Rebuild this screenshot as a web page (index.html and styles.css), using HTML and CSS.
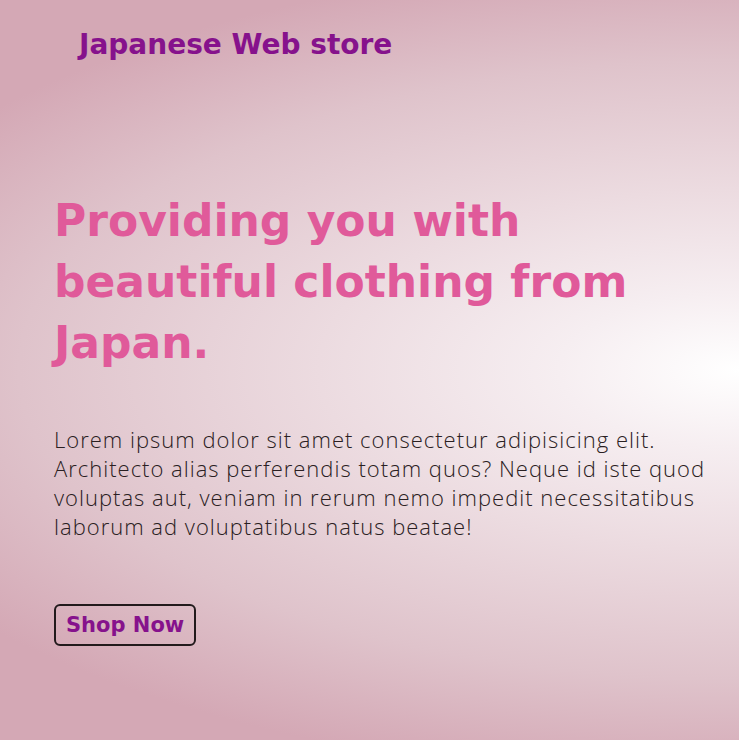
FILE: index.html
```html
<!DOCTYPE html>
<html lang="en">
<head>
<meta charset="utf-8">
<title>Japanese Web store</title>
<link rel="stylesheet" href="styles.css">
</head>
<body>
<header class="site-header">
  <h2 class="logo">Japanese Web store</h2>
</header>
<main class="hero">
  <h1 class="hero-title">Providing you with beautiful clothing from Japan.</h1>
  <p class="hero-text">Lorem ipsum dolor sit amet consectetur adipisicing elit. Architecto alias perferendis totam quos? Neque id iste quod voluptas aut, veniam in rerum nemo impedit necessitatibus laborum ad voluptatibus natus beatae!</p>
  <a class="shop-btn" href="#">Shop Now</a>
</main>
</body>
</html>
```
FILE: styles.css
```css
* { box-sizing: border-box; }
body {
  margin: 0;
  min-height: 740px;
  font-family: "Open Sans", "Lato", sans-serif;
  background: radial-gradient(ellipse 1000px 430px at 100% 50%, #ffffff 0%, #f6eef1 18%, #ecdbe0 42%, #dfc3cb 72%, #d4a8b5 96%);
}
.site-header {
  padding: 27px 0 0 79px;
}
.logo {
  margin: 0;
  font-family: "DejaVu Sans", sans-serif;
  font-size: 28px;
  line-height: 36px;
  font-weight: 700;
  color: #86128c;
}
.hero {
  padding: 127px 20px 0 54px;
  display: flex;
  flex-direction: column;
  align-items: flex-start;
}
.hero-title {
  margin: 0;
  font-family: "DejaVu Sans", sans-serif;
  font-size: 44px;
  line-height: 61px;
  font-weight: 700;
  color: #e05a9a;
  max-width: 640px;
}
.hero-text {
  margin: 52px 0 0 0;
  font-size: 22px;
  line-height: 29px;
  font-weight: 300;
  letter-spacing: 1px;
  color: #2a2022;
  max-width: 672px;
}
.shop-btn {
  margin-top: 63px;
  display: inline-block;
  padding: 7px 10px;
  border: 2px solid #221a1c;
  border-radius: 6px;
  font-family: "DejaVu Sans", sans-serif;
  font-size: 21px;
  line-height: 24px;
  font-weight: 700;
  color: #86128c;
  text-decoration: none;
}
```
